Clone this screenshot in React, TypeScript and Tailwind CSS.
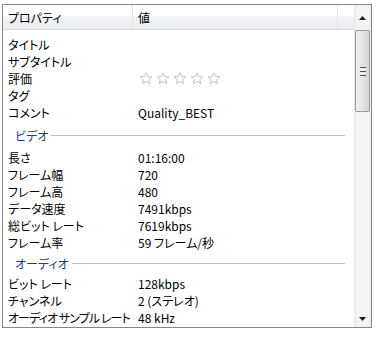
import React from 'react'

type Row = { label: string; value?: string; stars?: boolean; tight?: boolean }

const topRows: Row[] = [
    { label: 'タイトル' },
    { label: 'サブタイトル' },
    { label: '評価', stars: true },
    { label: 'タグ' },
    { label: 'コメント', value: 'Quality_BEST' },
]

const videoRows: Row[] = [
    { label: '長さ', value: '01:16:00' },
    { label: 'フレーム幅', value: '720' },
    { label: 'フレーム高', value: '480' },
    { label: 'データ速度', value: '7491kbps' },
    { label: '総ビット レート', value: '7619kbps' },
    { label: 'フレーム率', value: '59 フレーム/秒' },
]

const audioRows: Row[] = [
    { label: 'ビット レート', value: '128kbps' },
    { label: 'チャンネル', value: '2 (ステレオ)' },
    { label: 'オーディオ サンプル レート', value: '48 kHz', tight: true },
]

const Star = () => (
    <svg width="14" height="13" viewBox="0 0 14 13" className="shrink-0">
        <path
            d="M7 0.8 L8.7 4.6 L12.8 4.9 L9.7 7.6 L10.7 11.7 L7 9.5 L3.3 11.7 L4.3 7.6 L1.2 4.9 L5.3 4.6 Z"
            fill="white"
            stroke="#c4c4c4"
            strokeWidth="1"
            strokeLinejoin="round"
        />
    </svg>
)

const PropRow = ({ row }: { row: Row }) => (
    <div className="flex h-[17px] items-center">
        <div
            className={`w-[130px] shrink-0 pl-[5px] whitespace-nowrap ${
                row.tight ? 'tracking-[-0.9px]' : ''
            }`}
        >
            {row.label}
        </div>
        <div className="flex items-center pl-[5px] whitespace-nowrap">
            {row.stars ? (
                <div className="flex gap-[3px] pl-[1px]">
                    <Star />
                    <Star />
                    <Star />
                    <Star />
                    <Star />
                </div>
            ) : (
                row.value
            )}
        </div>
    </div>
)

const GroupHeader = ({ title, h }: { title: string; h: string }) => (
    <div className={`flex items-center pl-[12px] pr-[9px] ${h}`}>
        <span className="text-[#1e3a8a]">{title}</span>
        <div className="ml-[3px] h-px flex-1 bg-[#b9c2cf]" />
    </div>
)

const App = () => {
    return (
        <div
            className="h-[340px] w-[378px] bg-white pt-[4px] pl-[2px] text-[12px] leading-[15px] text-black [font-feature-settings:'palt']"
            style={{ fontFamily: '"Noto Sans CJK JP", "Noto Sans", sans-serif' }}
        >
            <div className="flex h-[324px] w-[370px] border border-[#828790] bg-white">
                <div className="flex min-w-0 flex-1 flex-col overflow-hidden">
                    {/* column header */}
                    <div className="flex h-[25px] shrink-0 border-b border-[#d5d5d5] bg-[linear-gradient(#ffffff_0%,#ffffff_45%,#f1f2f4_50%,#eceef1_100%)]">
                        <div className="flex w-[130px] items-center border-r border-[#e3e4e6] pl-[5px]">
                            プロパティ
                        </div>
                        <div className="flex w-[205px] items-center border-r border-[#e3e4e6] pl-[5px]">
                            値
                        </div>
                        <div className="flex-1" />
                    </div>
                    <div className="pt-[6px]">
                        {topRows.map((r) => (
                            <PropRow key={r.label} row={r} />
                        ))}
                    </div>
                    <GroupHeader title="ビデオ" h="h-[28px]" />
                    {videoRows.map((r) => (
                        <PropRow key={r.label} row={r} />
                    ))}
                    <GroupHeader title="オーディオ" h="h-[24px]" />
                    {audioRows.map((r) => (
                        <PropRow key={r.label} row={r} />
                    ))}
                </div>

                {/* scrollbar */}
                <div className="flex w-[17px] shrink-0 flex-col bg-[#f0f0f0] bg-[linear-gradient(90deg,#e8e8e8,#f4f4f4_20%,#f4f4f4_80%,#ebebeb)]">
                    <div className="flex h-[25px] items-center justify-center">
                        <svg width="7" height="4" viewBox="0 0 7 4">
                            <path d="M3.5 0 L7 4 L0 4 Z" fill="#1e1e1e" />
                        </svg>
                    </div>
                    <div className="mx-[1px] flex h-[82px] items-center justify-center rounded-[2px] border border-[#9a9a9a] bg-[linear-gradient(90deg,#f2f2f2,#e4e4e4_50%,#d4d4d4)]">
                        <div className="flex flex-col gap-[1px]">
                            <div className="h-px w-[6px] bg-[#555]" />
                            <div className="h-px w-[6px] bg-[#fff]" />
                            <div className="h-px w-[6px] bg-[#555]" />
                            <div className="h-px w-[6px] bg-[#fff]" />
                            <div className="h-px w-[6px] bg-[#555]" />
                        </div>
                    </div>
                    <div className="flex-1" />
                    <div className="flex h-[17px] items-center justify-center">
                        <svg width="7" height="4" viewBox="0 0 7 4">
                            <path d="M0 0 L7 0 L3.5 4 Z" fill="#1e1e1e" />
                        </svg>
                    </div>
                </div>
            </div>
        </div>
    )
}

export default App
